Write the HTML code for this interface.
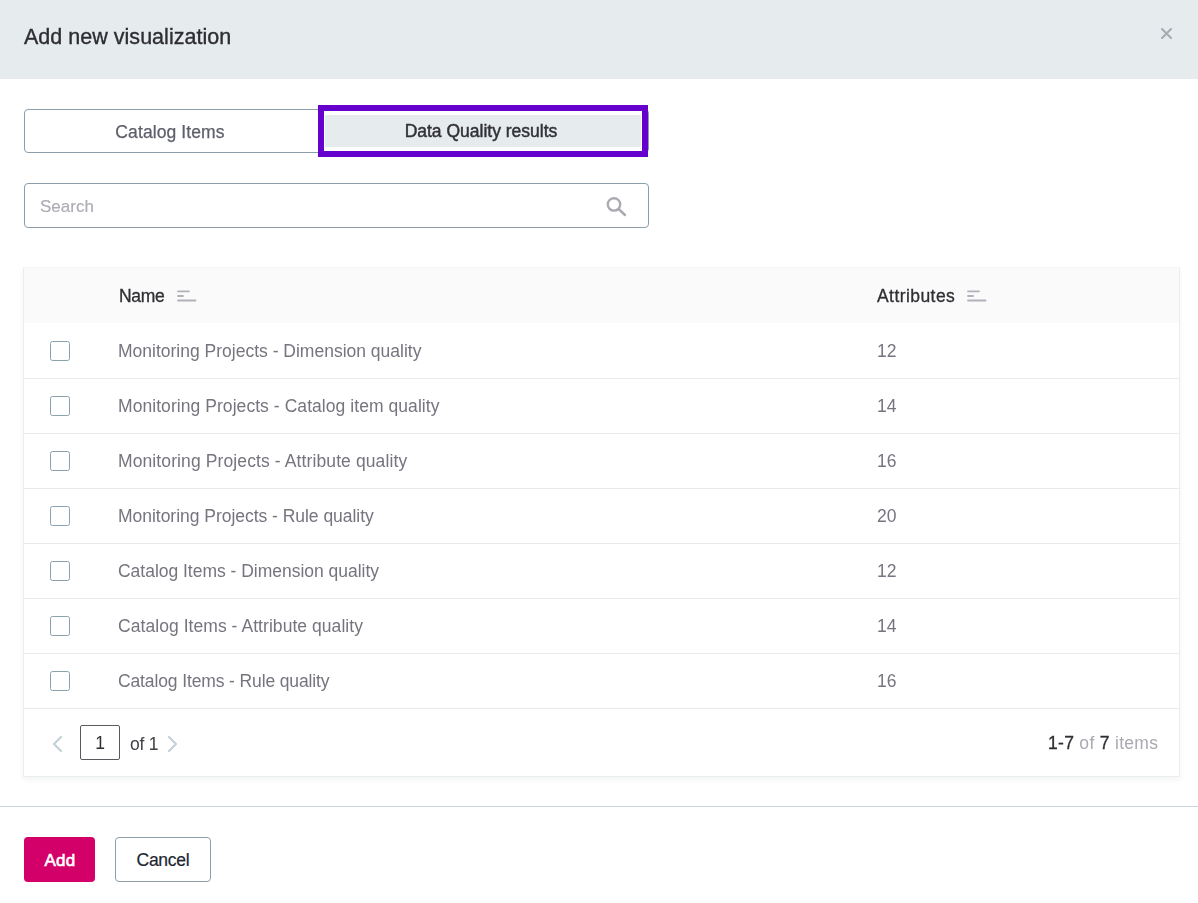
<!DOCTYPE html>
<html><head><meta charset="utf-8">
<style>
*{box-sizing:border-box;margin:0;padding:0}
html,body{width:1198px;height:903px;overflow:hidden;background:#fff;font-family:"Liberation Sans",sans-serif}
.a{position:absolute;white-space:nowrap}
.t{will-change:transform}
.hdr{left:0;top:0;width:1198px;height:79px;background:#e6ebee}
.title{left:24px;top:24.1px;font-size:21.5px;line-height:26px;color:#2d2d32;letter-spacing:0.02px;-webkit-text-stroke:0.35px #2d2d32}
.close{left:1161px;top:28px;width:11px;height:11px}
.tabs{left:24px;top:109px;width:625px;height:44px;border:1px solid #8c9ea9;border-radius:4px}
.tab1{left:24px;top:121.5px;width:292px;line-height:20px;text-align:center;font-size:17.5px;color:#5d5f6b;letter-spacing:0.1px;-webkit-text-stroke:0.25px #5d5f6b}
.tab2sel{left:325px;top:115px;width:316px;height:32px;background:#e6ebee}
.tab2{left:315px;top:121.2px;width:332px;line-height:20px;text-align:center;font-size:17.5px;color:#313136;letter-spacing:0px;-webkit-text-stroke:0.45px #313136}
.hl{left:318px;top:105px;width:330px;height:52px;border:6px solid #6600cc}
.search{left:24px;top:183px;width:625px;height:45px;border:1px solid #8c9ea9;border-radius:4px}
.sph{left:40px;top:196.9px;line-height:20px;font-size:17px;color:#abacb4;letter-spacing:0px;-webkit-text-stroke:0.15px #abacb4}
.sicon{left:604px;top:195px;width:24px;height:24px}
.table{left:23px;top:267px;width:1157px;height:510px;background:#fff;border:1px solid #ebeef0;border-top-color:#f4f6f7;box-shadow:0 3px 6px rgba(20,30,40,0.05)}
.thead{left:0;top:0;width:1155px;height:55px;background:#fafafa}
.th{top:17px;line-height:22px;font-size:17.5px;color:#2e2e33;-webkit-text-stroke:0.3px #2e2e33}
.row{left:0;width:1155px;height:55px;border-bottom:1px solid #e7ebee}
.cb{left:26px;top:17px;width:20px;height:20px;border:1px solid #8aa1ae;border-radius:2.5px}
.cell{top:16px;line-height:22px;font-size:17.5px;color:#75757f}
.name{left:94px;letter-spacing:0px}
.attr{left:853px;letter-spacing:0px}
.sort{width:20px;height:14px}
.pg{left:0;top:440px;width:1155px;height:68px}
.pinput{left:56px;top:17px;width:40px;height:35px;border:1px solid #59595f;border-radius:2px}
.pin1{left:56px;top:24px;width:40px;text-align:center;line-height:22px;font-size:17.5px;color:#2e2e33}
.of1{left:106px;top:24.5px;line-height:22px;font-size:17.5px;letter-spacing:-0.2px;color:#404046}
.count{left:1024px;top:23.5px;line-height:22px;font-size:17.5px;color:#a9aab2;letter-spacing:0.3px}
.count b{font-weight:normal;color:#2e2e33;-webkit-text-stroke:0.3px #2e2e33}
.fdiv{left:0;top:806px;width:1198px;height:1px;background:#c9d4da}
.btnadd{left:24px;top:837px;width:71px;height:45px;background:#d4006a;border-radius:4px}
.addtxt{left:24.5px;top:849.75px;width:71px;line-height:22px;text-align:center;color:#fff;font-size:17px;letter-spacing:0.2px;-webkit-text-stroke:0.6px #fff}
.btncancel{left:115px;top:837px;width:96px;height:45px;border:1px solid #8c9ea9;border-radius:4px}
.canceltxt{left:115px;top:848.8px;width:96px;line-height:22px;text-align:center;color:#1d2632;font-size:17.5px;letter-spacing:-0.25px;-webkit-text-stroke:0.2px #1d2632}
</style></head><body>
<div class="a hdr"></div>
<div class="a t title">Add new visualization</div>
<svg class="a close" viewBox="0 0 11 11"><path d="M1 1L10 10M10 1L1 10" stroke="#a9a9b1" stroke-width="2" stroke-linecap="round"/></svg>

<div class="a tabs"></div>
<div class="a t tab1">Catalog Items</div>
<div class="a tab2sel"></div>
<div class="a t tab2">Data Quality results</div>
<div class="a hl"></div>

<div class="a search"></div>
<div class="a t sph">Search</div>
<svg class="a sicon" viewBox="0 0 24 24"><circle cx="10" cy="9.4" r="6.2" fill="none" stroke="#aaaab2" stroke-width="2.4"/><path d="M14.6 14L21 20" stroke="#aaaab2" stroke-width="2.4" stroke-linecap="round"/></svg>

<div class="a table">
  <div class="a thead">
    <div class="a t th" style="left:94.5px;letter-spacing:-0.3px">Name</div>
    <svg class="a sort" style="left:153px;top:21px" viewBox="0 0 20 14"><path d="M1 2.3H12M1 7H6M1 11.5H18.5" stroke="#b1b1b9" stroke-width="1.8" stroke-linecap="round"/></svg>
    <div class="a t th" style="left:853px;letter-spacing:0.43px">Attributes</div>
    <svg class="a sort" style="left:943px;top:21px" viewBox="0 0 20 14"><path d="M1 2.3H12M1 7H6M1 11.5H18.5" stroke="#b1b1b9" stroke-width="1.8" stroke-linecap="round"/></svg>
  </div>
  <div class="a row" style="top:56px"><div class="a cb"></div><div class="a t cell name">Monitoring Projects - Dimension quality</div><div class="a t cell attr">12</div></div>
  <div class="a row" style="top:111px"><div class="a cb"></div><div class="a t cell name" style="letter-spacing:0.060px">Monitoring Projects - Catalog item quality</div><div class="a t cell attr">14</div></div>
  <div class="a row" style="top:166px"><div class="a cb"></div><div class="a t cell name" style="letter-spacing:0.110px">Monitoring Projects - Attribute quality</div><div class="a t cell attr">16</div></div>
  <div class="a row" style="top:221px"><div class="a cb"></div><div class="a t cell name" style="letter-spacing:-0.030px">Monitoring Projects - Rule quality</div><div class="a t cell attr">20</div></div>
  <div class="a row" style="top:276px"><div class="a cb"></div><div class="a t cell name" style="letter-spacing:-0.020px">Catalog Items - Dimension quality</div><div class="a t cell attr">12</div></div>
  <div class="a row" style="top:331px"><div class="a cb"></div><div class="a t cell name" style="letter-spacing:0.056px">Catalog Items - Attribute quality</div><div class="a t cell attr">14</div></div>
  <div class="a row" style="top:386px"><div class="a cb"></div><div class="a t cell name" style="letter-spacing:-0.125px">Catalog Items - Rule quality</div><div class="a t cell attr">16</div></div>
  <div class="a pg">
    <svg class="a" style="left:28px;top:27px;width:12px;height:18px" viewBox="0 0 12 18"><path d="M9 2L2 9L9 16" fill="none" stroke="#c4d0d8" stroke-width="2.2" stroke-linecap="round" stroke-linejoin="round"/></svg>
    <div class="a pinput"></div>
    <div class="a t pin1">1</div>
    <div class="a t of1">of 1</div>
    <svg class="a" style="left:142px;top:27px;width:12px;height:18px" viewBox="0 0 12 18"><path d="M3 2L10 9L3 16" fill="none" stroke="#c4d0d8" stroke-width="2.2" stroke-linecap="round" stroke-linejoin="round"/></svg>
    <div class="a t count"><b>1-7</b> of <b>7</b> items</div>
  </div>
</div>

<div class="a fdiv"></div>
<div class="a btnadd"></div>
<div class="a addtxt">Add</div>
<div class="a btncancel"></div>
<div class="a canceltxt">Cancel</div>
</body></html>
